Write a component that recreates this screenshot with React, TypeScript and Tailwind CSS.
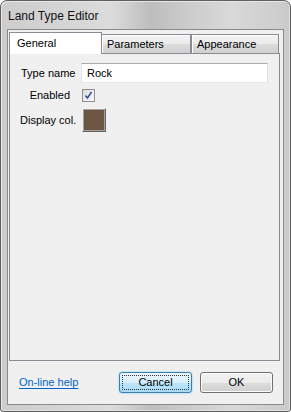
import React from "react";

function Check() {
  return (
    <svg width="11" height="11" viewBox="0 0 11 11">
      <path d="M2.5 5.5 L4.5 8 L8.5 2" fill="none" stroke="#2a4f9a" strokeWidth="1.5" />
    </svg>
  );
}

export default function App() {
  const font = { fontFamily: '"Liberation Sans", Arial, sans-serif' };
  return (
    <div
      className="w-[291px] h-[412px] flex flex-col border border-[#5f5f5f] rounded-t-[7px] rounded-b-[3px] bg-[linear-gradient(90deg,#cdcdcd_0%,#d6d6d6_25%,#dcdcdc_38%,#bdbdbd_52%,#c9c9c9_62%,#d9d9d9_80%,#cacaca_100%)] shadow-[inset_1px_1px_0_#e8e8e8,inset_-1px_-1px_0_#e0e0e0] text-black"
      style={font}
    >
      <div className="h-[28px] flex items-center pl-[7px] pt-[1px] text-[12px] text-[#111]">Land Type Editor</div>
      <div className="mx-[6px] mb-[6px] flex-1 border border-[#8a8a8a] bg-[#f0f0f0] flex flex-col text-[11px]">
        {/* tab control */}
        <div className="ml-[1px] mt-[1px] w-[271px] flex flex-col">
          <div className="flex items-end h-[22px]">
            <div className="w-[93px] h-[22px] bg-white border border-b-0 border-[#898c95] pl-[7px] pt-[2px] relative z-10 -mb-px">General</div>
            <div className="w-[89px] h-[19px] border border-l-0 border-b-0 border-[#898c95] bg-[linear-gradient(180deg,#f2f2f2_0%,#ebebeb_50%,#dddddd_51%,#cfcfcf_100%)] pl-[5px] pt-[1px] shadow-[inset_1px_1px_0_#ffffff]">Parameters</div>
            <div className="w-[88px] h-[19px] border border-b-0 border-[#898c95] bg-[linear-gradient(180deg,#f2f2f2_0%,#ebebeb_50%,#dddddd_51%,#cfcfcf_100%)] pl-[5px] pt-[1px] shadow-[inset_1px_1px_0_#ffffff]">Appearance</div>
          </div>
          <div className="h-[308px] border border-[#898c95] bg-[#f0f0f0] flex flex-col">
            <div className="flex items-center mt-[9px] h-[20px]">
              <div className="ml-[11px] w-[60px] text-[#000]">Type name</div>
              <div className="w-[187px] h-[20px] bg-white border border-[#abadb3] border-r-[#dbdfe6] border-b-[#e3e9ef] border-l-[#e2e3ea] flex items-center pl-[5px]">Rock</div>
            </div>
            <div className="flex items-center mt-[6px] h-[13px]">
              <div className="w-[60px] text-right">Enabled</div>
              <div className="ml-[12px] w-[13px] h-[13px] border border-[#8e8f8f] bg-[linear-gradient(135deg,#dcdcdc,#fbfbfb)] flex items-center justify-center">
                <Check />
              </div>
            </div>
            <div className="flex items-center mt-[6px] h-[24px]">
              <div className="ml-[10px] w-[62px]">Display col.</div>
              <div className="w-[24px] h-[24px] border border-t-[#f4f4f4] border-l-[#f4f4f4] border-r-[#646464] border-b-[#646464]">
                <div className="w-full h-full border border-[#a0a0a0] bg-[#6b5744]" />
              </div>
            </div>
          </div>
        </div>
        {/* bottom bar */}
        <div className="flex items-center mt-[11px] h-[21px]">
          <a className="ml-[11px] w-[100px] text-[#0066cc] underline underline-offset-[2px]">On-line help</a>
          <div className="w-[73px] h-[21px] rounded-[3px] border border-[#3c7fb1] bg-[linear-gradient(180deg,#eaf6fd_0%,#d9f0fc_50%,#bee6fd_51%,#a7d9f5_100%)] shadow-[0_0_2px_#6fc7f0] p-[2px]">
            <div className="w-full h-full border border-dotted border-[#333] flex items-center justify-center">Cancel</div>
          </div>
          <div className="ml-[8px] w-[73px] h-[21px] rounded-[3px] border border-[#707070] bg-[linear-gradient(180deg,#f2f2f2_0%,#ebebeb_50%,#dddddd_51%,#cfcfcf_100%)] shadow-[inset_0_0_0_1px_#fcfcfc] flex items-center justify-center">OK</div>
        </div>
      </div>
    </div>
  );
}
